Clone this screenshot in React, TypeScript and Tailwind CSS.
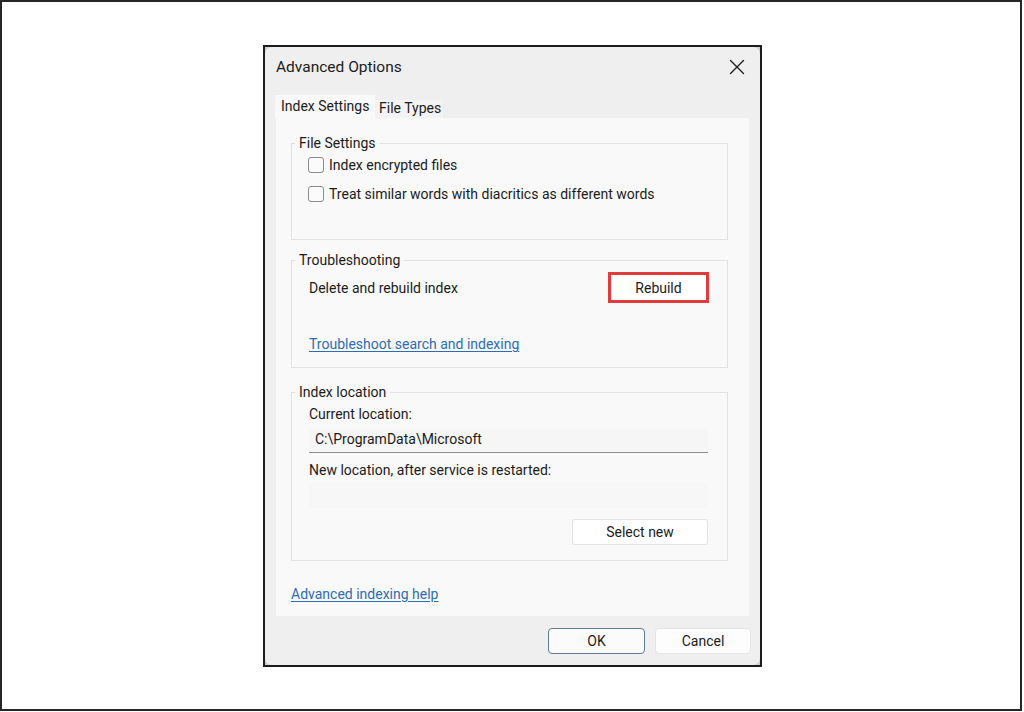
import React from "react";

const font = { fontFamily: "Roboto, 'Liberation Sans', sans-serif" };

function Checkbox({ label }: { label: string }) {
  return (
    <div className="flex h-[24px] items-center">
      <span className="mr-[5px] h-[16px] w-[16px] rounded-[3px] border border-[#8c8c8c] bg-[#fbfbfb]" />
      <span>{label}</span>
    </div>
  );
}

export default function App() {
  return (
    <div className="h-[712px] w-[1024px] bg-white" style={font}>
      <div className="h-[711px] w-[1022px] border-2 border-[#262626] pl-[261px] pt-[43px] text-[14px] leading-[20px] text-[#1b1b1b]">
        <div className="h-[622px] w-[499px] border-2 border-[#1c1c1c] bg-[#cfcfcf]">
          <div className="flex h-full flex-col rounded-[7px] bg-[#efefef]">
            {/* Title bar */}
            <div className="flex h-[48px] items-start justify-between pl-[11px] pr-[15px] pt-[9px]">
              <span className="text-[15.5px] leading-[22px]">Advanced Options</span>
              <svg width="16" height="16" viewBox="0 0 16 16" className="mt-[3px]">
                <path d="M1.5 1.5 L14.5 14.5 M14.5 1.5 L1.5 14.5" stroke="#1f1f1f" strokeWidth="1.4" strokeLinecap="round" />
              </svg>
            </div>
            {/* Tabs */}
            <div className="flex h-[23px] items-end pl-[10px]">
              <div className="h-[23px] w-[100px] whitespace-nowrap bg-[#f9f9f9] pl-[6px] leading-[22px]">Index Settings</div>
              <div className="h-[18px] w-[68px] whitespace-nowrap bg-[#f3f3f3] pl-[4px] leading-[16px]">File Types</div>
            </div>
            {/* Panel */}
            <div className="mx-[11px] flex h-[498px] flex-col bg-[#f9f9f9] pl-[15px]">
              <fieldset className="mt-[15px] h-[107px] w-[437px] border border-[#e2e2e2] pl-[16px]">
                <legend className="ml-[-13px] px-[4px] leading-[20px]">File Settings</legend>
                <div className="flex flex-col gap-[5px]">
                  <Checkbox label="Index encrypted files" />
                  <Checkbox label="Treat similar words with diacritics as different words" />
                </div>
              </fieldset>

              <fieldset className="mt-[10px] h-[118px] w-[437px] border border-[#e2e2e2] pl-[17px] pr-[18px]">
                <legend className="ml-[-14px] px-[4px] leading-[20px]">Troubleshooting</legend>
                <div className="mt-[2px] flex h-[31px] items-center justify-between">
                  <span>Delete and rebuild index</span>
                  <div className="flex h-[31px] w-[101px] items-center justify-center border-[3px] border-[#e03c3e] bg-white">
                    Rebuild
                  </div>
                </div>
                <div className="mt-[31px] text-[#2d6db3] underline underline-offset-2">
                  Troubleshoot search and indexing
                </div>
              </fieldset>

              <fieldset className="mt-[14px] h-[179px] w-[437px] border border-[#e2e2e2] pl-[17px] pr-[19px]">
                <legend className="ml-[-14px] px-[4px] leading-[20px]">Index location</legend>
                <div className="mt-[2px]">Current location:</div>
                <div className="mt-[5px] h-[24px] border-b border-[#8f8f8f] bg-[#f6f6f6] pl-[6px] leading-[20px]">
                  C:\ProgramData\Microsoft
                </div>
                <div className="mt-[7px]">New location, after service is restarted:</div>
                <div className="mt-[3px] h-[25px] bg-[#f7f7f7]" />
                <div className="mt-[11px] flex justify-end">
                  <div className="flex h-[26px] w-[136px] items-center justify-center rounded-[3px] border border-[#e3e3e3] bg-white">
                    Select new
                  </div>
                </div>
              </fieldset>

              <div className="mt-[23px] text-[#2d6db3] underline underline-offset-2">Advanced indexing help</div>
            </div>
            {/* Footer */}
            <div className="flex justify-end gap-[10px] pr-[9px] pt-[12px]">
              <div className="flex h-[26px] w-[97px] items-center justify-center rounded-[4px] border border-[#5f7d90] bg-[#fbfbfb]">
                OK
              </div>
              <div className="flex h-[26px] w-[96px] items-center justify-center rounded-[4px] border border-[#e4e4e4] bg-[#fdfdfd]">
                Cancel
              </div>
            </div>
          </div>
        </div>
      </div>
    </div>
  );
}
